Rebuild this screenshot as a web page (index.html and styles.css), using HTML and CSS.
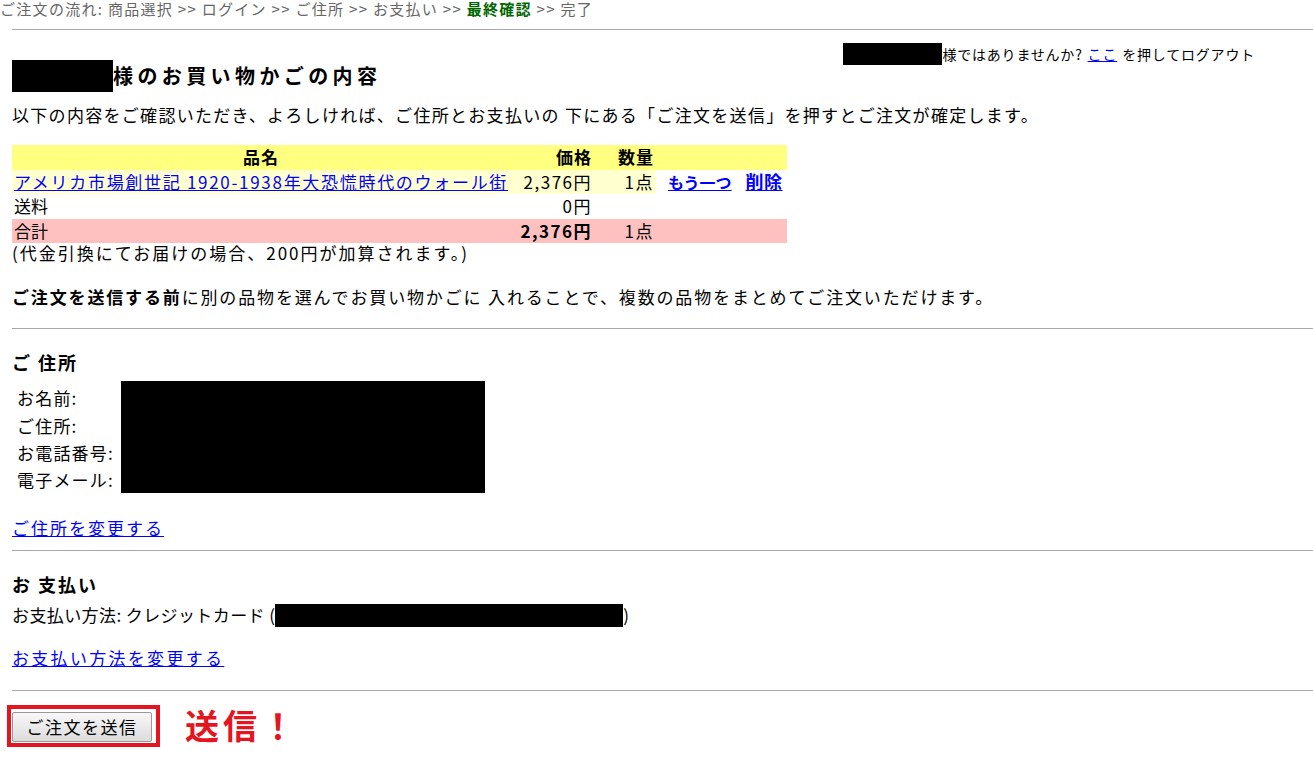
FILE: index.html
```html
<!DOCTYPE html>
<html lang="ja">
<head>
<meta charset="utf-8">
<title>ご注文の確認</title>
<link rel="stylesheet" href="styles.css">
</head>
<body>
<div class="flow">ご注文の流れ: 商品選択 &gt;&gt; ログイン &gt;&gt; ご住所 &gt;&gt; お支払い &gt;&gt; <b class="cur">最終確認</b> &gt;&gt; 完了</div>
<hr class="rule top">
<div class="notme"><span class="redact r-name"></span>様ではありませんか? <a href="#">ここ</a> を押してログアウト</div>
<h1 class="title"><span class="redact r-title"></span>様のお買い物かごの内容</h1>
<p class="intro">以下の内容をご確認いただき、よろしければ、ご住所とお支払いの 下にある「ご注文を送信」を押すとご注文が確定します。</p>
<table class="cart">
  <tr class="head"><th class="c-name">品名</th><th class="c-price">価格</th><th class="c-qty">数量</th><th class="c-act1"></th><th class="c-act2"></th></tr>
  <tr class="item"><td><a class="title-link" href="#">アメリカ市場創世記 1920-1938年大恐慌時代のウォール街</a></td><td class="num">2,376円</td><td class="num">1点</td><td class="act act1"><a href="#"><b>もう一つ</b></a></td><td class="act act2"><a class="del" href="#"><b>削除</b></a></td></tr>
  <tr class="ship"><td>送料</td><td class="num">0円</td><td></td><td></td><td></td></tr>
  <tr class="total"><td>合計</td><td class="num"><b>2,376円</b></td><td class="num">1点</td><td></td><td></td></tr>
</table>
<div class="note">(代金引換にてお届けの場合、200円が加算されます。)</div>
<p class="multi"><b>ご注文を送信する前</b>に別の品物を選んでお買い物かごに 入れることで、複数の品物をまとめてご注文いただけます。</p>
<hr class="rule">
<section class="sec addr">
  <h2>ご 住所</h2>
  <div class="addr-grid">
    <div class="labels">
      <div>お名前:</div>
      <div>ご住所:</div>
      <div>お電話番号:</div>
      <div>電子メール:</div>
    </div>
    <span class="redact r-addr"></span>
  </div>
  <a class="change" href="#">ご住所を変更する</a>
</section>
<hr class="rule">
<section class="sec pay">
  <h2>お 支払い</h2>
  <div class="method">お支払い方法: クレジットカード (<span class="redact r-card"></span>)</div>
  <a class="change" href="#">お支払い方法を変更する</a>
</section>
<hr class="rule">
<div class="submit-row">
  <div class="hl"><button class="send">ご注文を送信</button></div>
  <span class="shout">送信！</span>
</div>
</body>
</html>
```

FILE: styles.css
```css
html, body {
  margin: 0;
  padding: 0;
  background: #fff;
}
body {
  padding: 0 0 0 12px;
  font-family: "Noto Sans CJK JP", "Noto Sans", sans-serif;
  color: #000;
  font-size: 17px;
  line-height: 20.4px;
}
a { color: #00f; }
.flow {
  margin-left: -12px;
  font-size: 15px;
  color: #666;
  line-height: 20px;
  margin-top: -1px;
  letter-spacing: 1.3px;
}
.flow .cur { color: #060; }
.rule {
  border: 0;
  height: 1px;
  background: #a8a8a8;
  margin: 0;
}
.rule.top { margin: 10px 0 0 0; }
.notme {
  display: flex;
  justify-content: flex-end;
  align-items: center;
  font-size: 14px;
  letter-spacing: 0.8px;
  padding-right: 58px;
  margin-top: 13px;
  height: 22px;
}
.notme a { margin: 0 5px; }
.redact { display: inline-block; background: #000; }
.r-name { width: 99px; height: 22px; }
.title {
  display: flex;
  align-items: center;
  font-size: 20px;
  font-weight: bold;
  letter-spacing: 4.4px;
  margin: -5px 0 0 0;
  height: 32px;
}
.r-title { width: 101px; height: 32px; }
.intro { margin: 13px 0 0 0; letter-spacing: 1.3px; }
.cart {
  border-collapse: collapse;
  margin-top: 20px;
}
.cart th, .cart td {
  padding: 0 2px;
  height: 24.5px;
  white-space: nowrap;
}
.cart th { font-weight: bold; letter-spacing: 1px; }
.c-name { width: 494px; }
.c-price { text-align: right; width: 80px; }
.c-qty { text-align: right; width: 58px; }
.cart .head { background: #ffff80; }
.cart .item { background: #ffffd0; }
.cart .item td:nth-child(4), .cart .item td:nth-child(5) { background: #fff; }
.cart .total { background: #ffc0c0; }
.cart .num { text-align: right; letter-spacing: 1.5px; }
.cart .act { font-size: 16px; }
.cart .act1 { padding-left: 12px; }
.cart .act2 { padding-left: 12px; padding-right: 4px; }
.cart .del { font-size: 18px; letter-spacing: 0.5px; }
.cart .title-link { letter-spacing: 1.7px; }
.note { letter-spacing: 2px; }
.multi { margin: 23px 0 21px 0; letter-spacing: 1.85px; }
.sec h2 {
  font-size: 18px;
  font-weight: bold;
  letter-spacing: 2px;
  margin: 0;
  padding-top: 21px;
  line-height: 24px;
}
.addr-grid {
  display: flex;
  align-items: flex-start;
  margin-top: 7px;
}
.labels {
  padding: 3px 0 0 5px;
  width: 104px;
  letter-spacing: 1.2px;
}
.labels div { height: 27.4px; line-height: 27.4px; }
.r-addr { width: 364px; height: 112px; }
.change { display: inline-block; margin: 24px 0 12px 0; letter-spacing: 2px; }
.method {
  display: flex;
  align-items: center;
  margin-top: 7px;
  height: 24px;
  letter-spacing: 0.4px;
}
.r-card { width: 348px; height: 23px; }
.pay .change { margin: 21px 0 21px 0; letter-spacing: 2.3px; }
.submit-row {
  display: flex;
  align-items: center;
  margin: 14px 0 0 -5px;
}
.hl {
  border: 4px solid #e4151f;
  padding: 3px 4px 1px 1px;
}
.send {
  font-family: "Noto Sans CJK JP", sans-serif;
  font-size: 17px;
  letter-spacing: 1.5px;
  padding: 0;
  height: 30px;
  width: 140px;
  background: linear-gradient(#f8f8f8, #dcdcdc);
  border: 1px solid #9a9a9a;
  border-radius: 2px;
  color: #000;
}
.shout {
  margin-left: 25px;
  font-size: 34px;
  font-weight: bold;
  color: #e4151f;
  letter-spacing: 4px;
}
```
